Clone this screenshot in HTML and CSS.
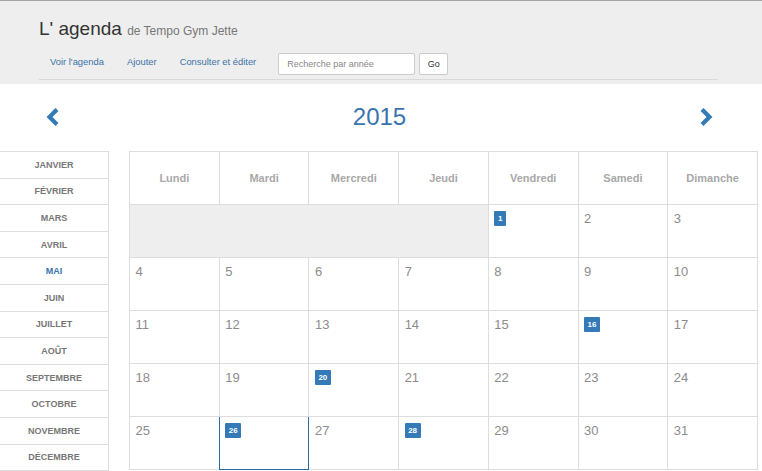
FILE: index.html
```html
<!DOCTYPE html>
<html lang="fr">
<head>
<meta charset="utf-8">
<title>L' agenda</title>
<link rel="stylesheet" href="styles.css">
</head>
<body>
<header class="top">
  <div class="top-inner">
    <h1 class="brand">L' agenda <small>de Tempo Gym Jette</small></h1>
    <nav class="nav">
      <a href="#">Voir l'agenda</a>
      <a href="#">Ajouter</a>
      <a href="#">Consulter et éditer</a>
      <form class="search">
        <input type="text" placeholder="Recherche par année">
        <button type="button">Go</button>
      </form>
    </nav>
  </div>
</header>

<div class="year-row">
  <a class="chev" href="#"><svg width="14" height="20" viewBox="0 0 14 20"><polyline points="11,2.5 3.5,10 11,17.5" fill="none" stroke="#337ab7" stroke-width="4.2" stroke-linejoin="miter"/></svg></a>
  <div class="year">2015</div>
  <a class="chev" href="#"><svg width="14" height="20" viewBox="0 0 14 20"><polyline points="3,2.5 10.5,10 3,17.5" fill="none" stroke="#337ab7" stroke-width="4.2" stroke-linejoin="miter"/></svg></a>
</div>

<div class="main">
  <ul class="months">
    <li>Janvier</li>
    <li>Février</li>
    <li>Mars</li>
    <li>Avril</li>
    <li class="active">Mai</li>
    <li>Juin</li>
    <li>Juillet</li>
    <li>Août</li>
    <li>Septembre</li>
    <li>Octobre</li>
    <li>Novembre</li>
    <li>Décembre</li>
  </ul>

  <div class="cal">
    <div class="hd">Lundi</div>
    <div class="hd">Mardi</div>
    <div class="hd">Mercredi</div>
    <div class="hd">Jeudi</div>
    <div class="hd">Vendredi</div>
    <div class="hd">Samedi</div>
    <div class="hd">Dimanche</div>

    <div class="day empty"></div>
    <div class="day"><span class="badge">1</span></div>
    <div class="day"><span class="num">2</span></div>
    <div class="day"><span class="num">3</span></div>

    <div class="day"><span class="num">4</span></div>
    <div class="day"><span class="num">5</span></div>
    <div class="day"><span class="num">6</span></div>
    <div class="day"><span class="num">7</span></div>
    <div class="day"><span class="num">8</span></div>
    <div class="day"><span class="num">9</span></div>
    <div class="day"><span class="num">10</span></div>

    <div class="day"><span class="num">11</span></div>
    <div class="day"><span class="num">12</span></div>
    <div class="day"><span class="num">13</span></div>
    <div class="day"><span class="num">14</span></div>
    <div class="day"><span class="num">15</span></div>
    <div class="day"><span class="badge">16</span></div>
    <div class="day"><span class="num">17</span></div>

    <div class="day"><span class="num">18</span></div>
    <div class="day"><span class="num">19</span></div>
    <div class="day"><span class="badge">20</span></div>
    <div class="day"><span class="num">21</span></div>
    <div class="day"><span class="num">22</span></div>
    <div class="day"><span class="num">23</span></div>
    <div class="day"><span class="num">24</span></div>

    <div class="day"><span class="num">25</span></div>
    <div class="day selected"><span class="badge">26</span></div>
    <div class="day"><span class="num">27</span></div>
    <div class="day"><span class="badge">28</span></div>
    <div class="day"><span class="num">29</span></div>
    <div class="day"><span class="num">30</span></div>
    <div class="day"><span class="num">31</span></div>
  </div>
</div>
</body>
</html>
```

FILE: styles.css
```css
* { box-sizing: border-box; }

html, body {
  margin: 0;
  padding: 0;
  background: #fff;
  font-family: "Liberation Sans", Arial, sans-serif;
  overflow: hidden;
}

.top {
  background: #eeeeee;
  border-top: 1px solid #a3a3a3;
  padding: 17px 0 4px;
}

.top-inner {
  margin: 0 44px 0 39px;
}

.brand {
  margin: 0;
  font-size: 19px;
  line-height: 22px;
  font-weight: normal;
  color: #333;
}

.brand small {
  font-size: 12px;
  color: #777;
}

.nav {
  display: flex;
  align-items: flex-start;
  margin-top: 11px;
  padding-bottom: 4px;
  border-bottom: 1px solid #d9d9d9;
}

.nav a {
  font-size: 9.4px;
  line-height: 18px;
  color: #3b72a8;
  text-decoration: none;
  padding: 0 11.5px;
}

.nav a:first-child { padding-left: 11px; }

.search {
  display: flex;
  margin-left: 10.5px;
}

.search input {
  width: 137px;
  height: 22px;
  border: 1px solid #cccccc;
  border-radius: 2px;
  padding: 0 8px;
  font-family: "Liberation Sans", Arial, sans-serif;
  font-size: 9px;
  color: #555;
  background: #fff;
}

.search input::placeholder { color: #888; }

.search button {
  margin-left: 4px;
  width: 29px;
  height: 22px;
  border: 1px solid #cccccc;
  border-radius: 2px;
  background: #fff;
  font-family: "Liberation Sans", Arial, sans-serif;
  font-size: 9px;
  color: #333;
  padding: 0;
}

.year-row {
  height: 67px;
  display: flex;
  align-items: center;
  justify-content: space-between;
  padding: 0 49px 2px 46px;
}

.chev {
  display: flex;
  margin-top: 1px;
}

.year {
  font-size: 24px;
  color: #3a74ad;
  line-height: 28px;
}

.main {
  display: flex;
  align-items: flex-start;
  gap: 20px;
}

.months {
  list-style: none;
  margin: 0 0 0 -1px;
  padding: 0;
  width: 110px;
  border: 1px solid #dddddd;
  border-bottom: none;
}

.months li {
  height: 26.6px;
  border-bottom: 1px solid #dddddd;
  display: flex;
  align-items: center;
  justify-content: center;
  font-size: 9px;
  font-weight: bold;
  text-transform: uppercase;
  color: #777;
}

.months li.active { color: #3a74ad; }

.cal {
  width: 629px;
  display: grid;
  grid-template-columns: repeat(7, 1fr);
  border-top: 1px solid #dddddd;
  border-left: 1px solid #dddddd;
}

.hd {
  height: 53px;
  border-right: 1px solid #dddddd;
  border-bottom: 1px solid #dddddd;
  display: flex;
  align-items: center;
  justify-content: center;
  font-size: 11px;
  font-weight: bold;
  color: #a8a8a8;
}

.day {
  height: 53px;
  border-right: 1px solid #dddddd;
  border-bottom: 1px solid #dddddd;
  padding: 6px 5.5px;
}

.day.empty {
  grid-column: span 4;
  background: #eeeeee;
}

.day.selected {
  border-right-color: #2f6aa3;
  border-bottom-color: #2f6aa3;
  box-shadow: -1px 0 0 #2f6aa3;
}

.num {
  display: block;
  font-size: 13px;
  line-height: 15px;
  color: #8c8c8c;
}

.badge {
  display: inline-block;
  min-width: 12px;
  height: 15px;
  padding: 0 3.5px;
  line-height: 15px;
  text-align: center;
  background: #337ab7;
  color: #fff;
  font-size: 8px;
  font-weight: bold;
  border-radius: 1px;
  vertical-align: top;
}
```
